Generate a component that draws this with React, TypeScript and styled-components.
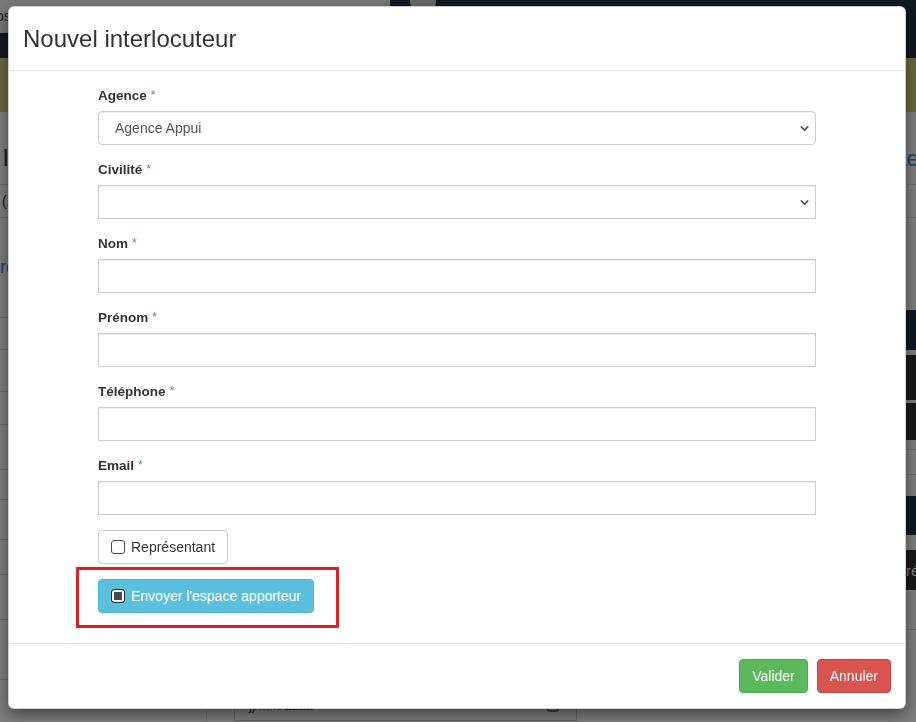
import React from "react";
import styled, { createGlobalStyle } from "styled-components";
import { ChevronDown, Calendar } from "lucide-react";

const GlobalStyle = createGlobalStyle`
  html, body {
    margin: 0;
    padding: 0;
  }
  body {
    font-family: "Liberation Sans", Arial, sans-serif;
    font-size: 14px;
    color: #333;
    background: #fff;
    overflow: hidden;
  }
  * {
    box-sizing: border-box;
  }
`;

/* ---------- page behind the modal ---------- */

const Page = styled.div`
  width: 916px;
  height: 722px;
  overflow: hidden;
  background: #fff;
`;

const TopBar = styled.header`
  height: 58px;
  background: #26323e;
  display: flex;
  align-items: flex-start;
`;

const SearchBox = styled.div`
  width: 390px;
  height: 33px;
  background: #f6f6f6;
  border-radius: 0 0 4px 0;
  padding-top: 8px;
  font-size: 14px;
  color: #333;
  text-indent: -14px;
  overflow: hidden;
`;

const Avatar = styled.div`
  width: 26px;
  height: 26px;
  margin: -12px 0 0 20px;
  border-radius: 50%;
  background: #d6d6d6;
`;

const SubBar = styled.div`
  height: 54px;
  background: #d2d87e;
`;

const Content = styled.main`
  display: grid;
  grid-template-columns: 207px 1fr;
`;

const SidePanel = styled.section`
  border-right: 1px solid #ddd;
`;

const MainPanel = styled.section`
  padding-left: 0;
`;

const Strip = styled.div<{
  $h: number;
  $bg?: string;
  $line?: boolean;
  $color?: string;
  $size?: number;
  $indent?: number;
  $low?: boolean;
}>`
  height: ${(p) => p.$h}px;
  background: ${(p) => p.$bg ?? "transparent"};
  border-bottom: ${(p) => (p.$line ? "1px solid #ddd" : "none")};
  color: ${(p) => p.$color ?? "#333"};
  font-size: ${(p) => p.$size ?? 14}px;
  padding-left: ${(p) => p.$indent ?? 4}px;
  padding-bottom: ${(p) => (p.$low ? 12 : 0)}px;
  display: flex;
  align-items: ${(p) => (p.$low ? "flex-end" : "center")};
  white-space: nowrap;
  overflow: hidden;
`;

const DateField = styled.div`
  margin-left: 27px;
  width: 343px;
  height: 32px;
  border: 1px solid #ccc;
  display: flex;
  align-items: center;
  justify-content: space-between;
  padding: 0 16px 0 14px;
  color: #333;
  font-size: 13px;
`;

/* ---------- modal ---------- */

const Backdrop = styled.div`
  position: fixed;
  inset: 0;
  background: rgba(0, 0, 0, 0.5);
`;

const Dialog = styled.div`
  margin: 6px 0 0 8px;
  width: 898px;
  background: #fff;
  border: 1px solid rgba(0, 0, 0, 0.2);
  border-radius: 6px;
  box-shadow: 0 5px 15px rgba(0, 0, 0, 0.5);
`;

const Header = styled.div`
  padding: 15px 15px 15px 14px;
  border-bottom: 1px solid #e5e5e5;
`;

const Title = styled.h4`
  margin: 0;
  font-size: 24px;
  font-weight: 400;
  line-height: 33px;
  color: #333;
`;

const Body = styled.div`
  padding: 15px;
`;

const FormColumn = styled.div`
  max-width: 718px;
  margin: 0 auto;
`;

const Group = styled.div`
  margin-bottom: 15px;
`;

const Label = styled.label`
  display: block;
  font-size: 13.5px;
  font-weight: 700;
  line-height: 19px;
  margin-bottom: 6px;
  color: #333;
`;

const Required = styled.span`
  color: #3c8dbc;
  font-weight: 400;
  font-size: 12px;
  margin-left: 4px;
  vertical-align: 1px;
`;

const Input = styled.input<{ $rounded?: boolean }>`
  display: block;
  width: 100%;
  height: 34px;
  padding: 6px 12px;
  border: 1px solid #ccc;
  border-radius: ${(p) => (p.$rounded ? 4 : 0)}px;
  box-shadow: inset 0 1px 1px rgba(0, 0, 0, 0.075);
  font-family: "Liberation Sans", Arial, sans-serif;
  font-size: 14px;
  color: #555;
  background: #fff;
  outline: none;
`;

const SelectWrap = styled.div`
  position: relative;
`;

const Select = styled.select<{ $rounded?: boolean }>`
  display: block;
  width: 100%;
  height: 34px;
  padding: 0 30px 0 16px;
  border: 1px solid #ccc;
  border-radius: ${(p) => (p.$rounded ? 4 : 0)}px;
  box-shadow: inset 0 1px 1px rgba(0, 0, 0, 0.075);
  appearance: none;
  font-family: "Liberation Sans", Arial, sans-serif;
  font-size: 14px;
  color: #555;
  background: #fff;
  outline: none;
`;

const Chevron = styled.span`
  position: absolute;
  right: 5px;
  top: 11px;
  display: flex;
  color: #555;
  pointer-events: none;
`;

const ToggleButton = styled.label<{ $variant: "default" | "info" }>`
  display: inline-flex;
  align-items: center;
  gap: 6px;
  height: 34px;
  padding: 0 12px 0 12px;
  border: 1px solid ${(p) => (p.$variant === "info" ? "#46b8da" : "#ccc")};
  border-radius: 4px;
  background: ${(p) => (p.$variant === "info" ? "#5bc0de" : "#fff")};
  color: ${(p) => (p.$variant === "info" ? "#fff" : "#333")};
  font-size: 14px;
  cursor: pointer;
`;

const Box = styled.span<{ $checked?: boolean }>`
  width: 14px;
  height: 14px;
  border-radius: 3px;
  border: 1px solid ${(p) => (p.$checked ? "#27303b" : "#4a4a4a")};
  background: ${(p) => (p.$checked ? "#3f4a5a" : "#fff")};
  box-shadow: ${(p) => (p.$checked ? "inset 0 0 0 2px #fff" : "none")};
  flex: none;
`;

const HighlightRow = styled.div`
  position: relative;
  margin-bottom: 15px;
`;

const Highlight = styled.div`
  position: absolute;
  left: -22px;
  top: -12px;
  width: 263px;
  height: 61px;
  border: 3px solid #e31e25;
  pointer-events: none;
`;

const Footer = styled.div`
  display: flex;
  justify-content: flex-end;
  gap: 9px;
  padding: 15px 14px 15px 15px;
  border-top: 1px solid #e5e5e5;
`;

const ActionButton = styled.button<{ $variant: "success" | "danger" }>`
  height: 34px;
  padding: 0 12px;
  border: 1px solid ${(p) => (p.$variant === "success" ? "#4cae4c" : "#d43f3a")};
  border-radius: 4px;
  background: ${(p) => (p.$variant === "success" ? "#5cb85c" : "#d9534f")};
  color: #fff;
  font-family: "Liberation Sans", Arial, sans-serif;
  font-size: 14px;
  cursor: pointer;
`;

const fields = [
  { label: "Nom" },
  { label: "Prénom" },
  { label: "Téléphone" },
  { label: "Email" },
];

export default function App() {
  return (
    <>
      <GlobalStyle />
      <Page>
        <TopBar>
          <SearchBox>Dossiers</SearchBox>
          <Avatar />
        </TopBar>
        <SubBar />
        <Content>
          <SidePanel>
            <Strip $h={73} $line $size={24} $indent={3} $low>
              liste
            </Strip>
            <Strip $h={33} $line $indent={2}>
              (2 résultats)
            </Strip>
            <Strip $h={100} $line $color="#3c8dbc" $size={18} $indent={0}>
              rechercher
            </Strip>
            <Strip $h={32} $line />
            <Strip $h={42} $line />
            <Strip $h={33} $line />
            <Strip $h={45} $line />
            <Strip $h={30} $line />
            <Strip $h={40} $line />
            <Strip $h={35} $line />
            <Strip $h={45} $line />
            <Strip $h={60} $line />
          </SidePanel>
          <MainPanel>
            <Strip $h={73} $line $color="#3c8dbc" $size={22} $indent={609} $low>
              Interlocuteurs
            </Strip>
            <Strip $h={33} $line />
            <Strip $h={92} />
            <Strip $h={40} $bg="#1f3447" />
            <Strip $h={5} />
            <Strip $h={45} $bg="#333" />
            <Strip $h={3} />
            <Strip $h={37} $bg="#333" />
            <Strip $h={10} $line />
            <Strip $h={25} $line />
            <Strip $h={21} />
            <Strip $h={39} $bg="#1f3447" />
            <Strip $h={15} />
            <Strip $h={40} $bg="#333" $color="#fff" $size={15} $indent={699}>
              réglages
            </Strip>
            <Strip $h={40} $line />
            <Strip $h={59} />
            <DateField>
              <span>jj/mm/aaaa</span>
              <Calendar size={14} color="#333" />
            </DateField>
          </MainPanel>
        </Content>
      </Page>

      <Backdrop>
        <Dialog>
          <Header>
            <Title>Nouvel interlocuteur</Title>
          </Header>
          <Body>
            <FormColumn>
              <Group>
                <Label>
                  Agence<Required>*</Required>
                </Label>
                <SelectWrap>
                  <Select $rounded defaultValue="appui">
                    <option value="appui">Agence Appui</option>
                  </Select>
                  <Chevron>
                    <ChevronDown size={13} strokeWidth={3} />
                  </Chevron>
                </SelectWrap>
              </Group>
              <Group>
                <Label>
                  Civilité<Required>*</Required>
                </Label>
                <SelectWrap>
                  <Select defaultValue="">
                    <option value=""></option>
                    <option value="m">M.</option>
                    <option value="mme">Mme</option>
                  </Select>
                  <Chevron>
                    <ChevronDown size={13} strokeWidth={3} />
                  </Chevron>
                </SelectWrap>
              </Group>
              {fields.map((f) => (
                <Group key={f.label}>
                  <Label>
                    {f.label}
                    <Required>*</Required>
                  </Label>
                  <Input type="text" />
                </Group>
              ))}
              <Group>
                <ToggleButton $variant="default">
                  <Box />
                  Représentant
                </ToggleButton>
              </Group>
              <HighlightRow>
                <ToggleButton $variant="info">
                  <Box $checked />
                  Envoyer l'espace apporteur
                </ToggleButton>
                <Highlight />
              </HighlightRow>
            </FormColumn>
          </Body>
          <Footer>
            <ActionButton $variant="success">Valider</ActionButton>
            <ActionButton $variant="danger">Annuler</ActionButton>
          </Footer>
        </Dialog>
      </Backdrop>
    </>
  );
}
